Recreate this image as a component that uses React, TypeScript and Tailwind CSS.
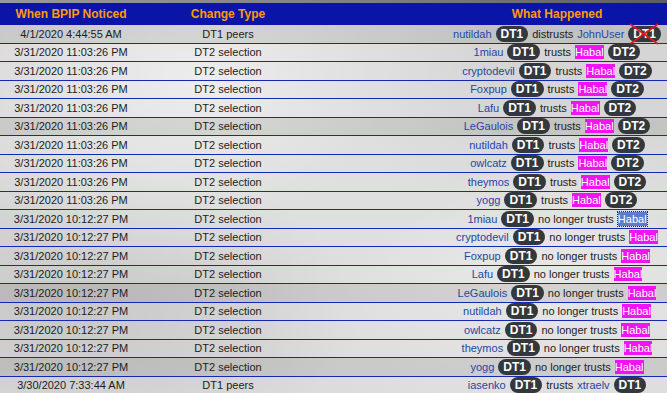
import React from 'react';

type Row = {
  when: string;
  change: string;
  who: string;
  verb: string;
  target: string;
  habal?: boolean;
  selected?: boolean;
  badge2?: string;
  crossed?: boolean;
  dark?: boolean;
};

const t1 = '3/31/2020 11:03:26 PM';
const t2 = '3/31/2020 10:12:27 PM';
const names = ['1miau', 'cryptodevil', 'Foxpup', 'Lafu', 'LeGaulois', 'nutildah', 'owlcatz', 'theymos', 'yogg'];

const rows: Row[] = [
  { when: '4/1/2020 4:44:55 AM', change: 'DT1 peers', who: 'nutildah', verb: 'distrusts', target: 'JohnUser', badge2: 'DT1', crossed: true, dark: true },
  ...names.map((n, i) => ({ when: t1, change: 'DT2 selection', who: n, verb: 'trusts', target: 'Habal', habal: true, badge2: 'DT2', dark: i === 4 })),
  ...names.map((n, i) => ({ when: t2, change: 'DT2 selection', who: n, verb: 'no longer trusts', target: 'Habal', habal: true, selected: i === 0, dark: i === 4 || i === 8 })),
  { when: '3/30/2020 7:33:44 AM', change: 'DT1 peers', who: 'iasenko', verb: 'trusts', target: 'xtraelv', badge2: 'DT1' },
];

const Badge = ({ label, crossed }: { label: string; crossed?: boolean }) => (
  <span className="relative inline-flex items-center h-[16px] px-[5px] rounded-full bg-[#33383d] text-white font-bold text-[12px] leading-none">
    {label}
    {crossed && (
      <svg className="absolute left-0 -top-[3px]" width="32" height="22" viewBox="0 0 32 22">
        <line x1="2" y1="1" x2="30" y2="21" stroke="#e8141c" strokeWidth="1.6" />
        <line x1="30" y1="1" x2="2" y2="21" stroke="#e8141c" strokeWidth="1.6" />
      </svg>
    )}
  </span>
);

const Target = ({ r }: { r: Row }) => {
  if (r.selected)
    return <span className="bg-[#5f7bc9] text-white outline-1 outline-dotted outline-[#1b2a6a] leading-[14px]">{r.target}</span>;
  if (r.habal) return <span className="bg-[#f014f0] text-white leading-[14px]">{r.target}</span>;
  return <span className="text-[#2447a3]">{r.target}</span>;
};

export default function App() {
  return (
    <div
      className="w-[667px] h-[393px] overflow-hidden text-[11px] text-[#1c1c1c] bg-[#d8d8d8] bg-[radial-gradient(ellipse_at_30%_20%,#ededed_0%,transparent_45%),radial-gradient(ellipse_at_80%_70%,#e8e8e8_0%,transparent_40%),radial-gradient(ellipse_at_10%_80%,#c8c8c8_0%,transparent_35%),linear-gradient(180deg,#d4d4d4,#dcdcdc)]"
      style={{ fontFamily: '"Liberation Sans", Arial, sans-serif' }}
    >
      <div className="w-[800px]">
        <div className="h-[3px] bg-[linear-gradient(90deg,#9a9a9a,#7d7d7d_50%,#5c5c5c_85%,#3a3a3a)]" />
        <div className="grid grid-cols-[142px_172px_486px] h-[22px] items-center bg-[#0a14a6] text-[#ff9a0a] font-bold text-[12px] text-center">
          <div>When BPIP Noticed</div>
          <div>Change Type</div>
          <div>What Happened</div>
        </div>
        {rows.map((r, i) => (
          <div
            key={i}
            className={`grid grid-cols-[142px_172px_486px] h-[18.5px] items-center text-center border-b border-[#1428b0] ${r.dark ? 'bg-[#00000016]' : ''}`}
          >
            <div>{r.when}</div>
            <div>{r.change}</div>
            <div className="flex items-center justify-center gap-[4px]">
              <span className="text-[#2447a3]">{r.who}</span>
              <Badge label="DT1" />
              <span>{r.verb}</span>
              <Target r={r} />
              {r.badge2 && <Badge label={r.badge2} crossed={r.crossed} />}
            </div>
          </div>
        ))}
      </div>
    </div>
  );
}
